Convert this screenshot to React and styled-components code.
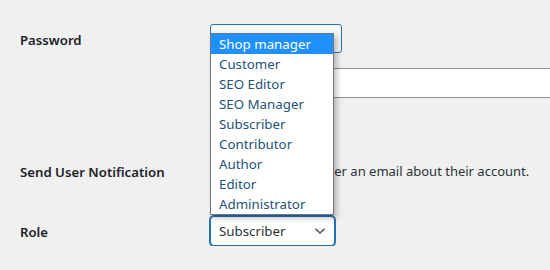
import React from "react";
import styled, { createGlobalStyle } from "styled-components";

const GlobalStyle = createGlobalStyle`
  html, body {
    margin: 0;
    padding: 0;
    background: #f0f0f1;
    overflow: hidden;
  }
  body {
    font-family: "Noto Sans", "Open Sans", sans-serif;
    font-size: 13.3px;
    color: #1d2327;
  }
`;

const roles = [
  "Shop manager",
  "Customer",
  "SEO Editor",
  "SEO Manager",
  "Subscriber",
  "Contributor",
  "Author",
  "Editor",
  "Administrator",
];

const FormTable = styled.div`
  display: grid;
  grid-template-columns: 210px 1fr;
  width: 550px;
  overflow: hidden;
`;

const Label = styled.div`
  padding: ${(p) => p.pad || "0"};
  padding-left: 20px;
  font-weight: 600;
  font-size: 13.2px;
  line-height: 20px;
  color: #1d2327;
`;

const Field = styled.div`
  padding: ${(p) => p.pad || "0"};
  display: flex;
  flex-direction: column;
  align-items: flex-start;
  min-width: 0;
`;

const GhostButton = styled.div`
  width: 132px;
  height: 29px;
  box-sizing: border-box;
  border: 1px solid #2271b1;
  border-radius: 3px;
  background: #f6f7f7;
`;

const TextInput = styled.div`
  margin-top: 15px;
  width: 400px;
  height: 30px;
  box-sizing: border-box;
  border: 1px solid #8c8f94;
  background: #fff;
`;

const CheckRow = styled.label`
  display: flex;
  align-items: center;
  gap: 8px;
  font-size: 13px;
  line-height: 20px;
  color: #2c3338;
  white-space: nowrap;
`;

const Checkbox = styled.span`
  width: 16px;
  height: 16px;
  flex: none;
  box-sizing: border-box;
  border: 1px solid #8c8f94;
  border-radius: 4px;
  background: #fff;
`;

const SelectWrap = styled.div`
  position: relative;
`;

const Select = styled.div`
  width: 125px;
  height: 30px;
  box-sizing: border-box;
  border: 1px solid #2271b1;
  box-shadow: 0 0 0 1px #2271b1;
  border-radius: 4px;
  background: #fff;
  display: flex;
  align-items: center;
  justify-content: space-between;
  padding: 0 8px 0 8px;
  color: #2c3338;
`;

const Menu = styled.ul`
  position: absolute;
  left: 0;
  bottom: calc(100% + 1px);
  width: 124px;
  box-sizing: border-box;
  margin: 0;
  padding: 0;
  list-style: none;
  background: #fff;
  border: 1px solid #767676;
  box-shadow: 3px 3px 6px rgba(0, 0, 0, 0.25);
`;

const Option = styled.li`
  height: 20px;
  line-height: 20px;
  padding-left: 8px;
  white-space: nowrap;
  background: ${(p) => (p.active ? "#1e90ff" : "transparent")};
  color: ${(p) => (p.active ? "#fff" : "#24527a")};
`;

function Chevron() {
  return (
    <svg width="12" height="8" viewBox="0 0 12 8">
      <path d="M1.5 1.8 L6 6 L10.5 1.8" fill="none" stroke="#50575e" strokeWidth="1.6" />
    </svg>
  );
}

export default function App() {
  return (
    <>
      <GlobalStyle />
      <FormTable>
        <Label pad="30px 0 0 0">Password</Label>
        <Field pad="24px 0 0 0">
          <GhostButton />
          <TextInput />
        </Field>

        <Label pad="64px 0 0 0">Send User Notification</Label>
        <Field pad="63px 0 0 0">
          <CheckRow>
            <Checkbox />
            Send the new user an email about their account.
          </CheckRow>
        </Field>

        <Label pad="40px 0 0 0">Role</Label>
        <Field pad="34px 0 0 0">
          <SelectWrap>
            <Menu>
              {roles.map((r) => (
                <Option key={r} active={r === "Shop manager"}>
                  {r}
                </Option>
              ))}
            </Menu>
            <Select>
              <span>Subscriber</span>
              <Chevron />
            </Select>
          </SelectWrap>
        </Field>
      </FormTable>
    </>
  );
}
